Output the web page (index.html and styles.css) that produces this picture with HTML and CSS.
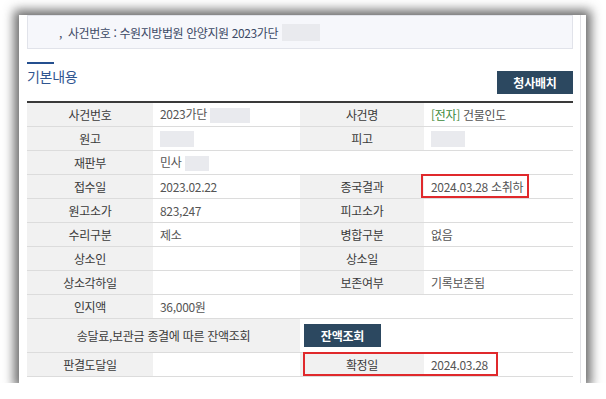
FILE: index.html
```html
<!DOCTYPE html>
<html lang="ko">
<head>
    <meta charset="UTF-8">
    <title>사건 기본내용</title>
    <link rel="stylesheet" href="styles.css">
</head>
<body>
    <div class="frame">
        <div class="inner">
            <div class="case-info">
                <span class="bullet">,</span> 사건번호 : 수원지방법원 안양지원 2023가단 <span class="mask mask-info"></span>
            </div>

            <div class="title-row">
                <h3 class="title">기본내용</h3>
                <button class="btn btn-map">청사배치</button>
            </div>

            <table class="basic">
                <colgroup>
                    <col class="c-label">
                    <col class="c-value">
                    <col class="c-label2">
                    <col class="c-value2">
                </colgroup>
                <tr>
                    <th>사건번호</th>
                    <td>2023가단 <span class="mask mask-no"></span></td>
                    <th>사건명</th>
                    <td><span class="green">[전자]</span> 건물인도</td>
                </tr>
                <tr>
                    <th>원고</th>
                    <td><span class="mask mask-name"></span></td>
                    <th>피고</th>
                    <td><span class="mask mask-name"></span></td>
                </tr>
                <tr>
                    <th>재판부</th>
                    <td colspan="3">민사 <span class="mask mask-div"></span></td>
                </tr>
                <tr>
                    <th>접수일</th>
                    <td>2023.02.22</td>
                    <th>종국결과</th>
                    <td class="mark-cell"><span class="mark mark-result"></span>2024.03.28 소취하</td>
                </tr>
                <tr>
                    <th>원고소가</th>
                    <td>823,247</td>
                    <th>피고소가</th>
                    <td></td>
                </tr>
                <tr>
                    <th>수리구분</th>
                    <td>제소</td>
                    <th>병합구분</th>
                    <td>없음</td>
                </tr>
                <tr>
                    <th>상소인</th>
                    <td></td>
                    <th>상소일</th>
                    <td></td>
                </tr>
                <tr>
                    <th>상소각하일</th>
                    <td></td>
                    <th>보존여부</th>
                    <td>기록보존됨</td>
                </tr>
                <tr>
                    <th>인지액</th>
                    <td colspan="3">36,000원</td>
                </tr>
                <tr class="tall">
                    <th colspan="2">송달료,보관금 종결에 따른 잔액조회</th>
                    <td colspan="2" class="btn-cell"><button class="btn btn-balance">잔액조회</button></td>
                </tr>
                <tr>
                    <th>판결도달일</th>
                    <td></td>
                    <th class="mark-cell"><span class="mark mark-confirm"></span>확정일</th>
                    <td>2024.03.28</td>
                </tr>
            </table>
        </div>
    </div>
</body>
</html>
```

FILE: styles.css
```css
body {
    margin: 0;
    background: #ffffff;
    font-family: "Noto Sans CJK KR", "Noto Sans", sans-serif;
    color: #555;
}
.frame {
    margin: 15px 0 0 19px;
    width: 567px;
    height: 368px;
    background: #fff;
    box-shadow: 0 0 10px 5px rgba(60, 60, 60, 0.75);
}
.inner {
    position: relative;
    padding: 0 13px 0 8px;
    height: 100%;
    box-sizing: border-box;
}
.inner::after {
    content: "";
    position: absolute;
    right: 5px;
    top: 0;
    bottom: 0;
    border-right: 1px solid #e2e2e6;
}
.case-info {
    height: 34px;
    box-sizing: border-box;
    background: #f6f7fb;
    border: 1px solid #e1e3ea;
    padding: 0 0 0 31px;
    display: flex;
    align-items: center;
    font-size: 12px;
    color: #3d4a66;
    letter-spacing: -0.4px;
}
.bullet {
    margin-right: 6px;
}
.mask {
    display: inline-block;
    background: #e9eaee;
    vertical-align: middle;
}
.mask-info {
    width: 38px;
    height: 17px;
    margin-left: 4px;
}
.mask-no {
    width: 40px;
    height: 15px;
}
.mask-name {
    width: 34px;
    height: 16px;
}
.mask-div {
    width: 24px;
    height: 15px;
}
.title-row {
    display: flex;
    justify-content: space-between;
    align-items: flex-end;
    height: 45px;
    margin-bottom: 7px;
}
.title {
    margin: 0 0 10px;
    padding-top: 6px;
    font-size: 14px;
    font-weight: normal;
    color: #2f5590;
    line-height: 16px;
    letter-spacing: -0.3px;
    background: linear-gradient(#244f8f, #244f8f) no-repeat 0 0 / 27px 2px;
}
.btn {
    border: none;
    background: #2c4860;
    color: #fff;
    font-family: inherit;
    font-size: 12px;
    font-weight: bold;
    letter-spacing: -0.2px;
    padding: 0;
    cursor: pointer;
}
.btn-map {
    width: 76px;
    height: 23px;
}
.basic {
    width: 546px;
    border-collapse: collapse;
    border-top: 2px solid #3a3a3a;
    font-size: 12px;
    letter-spacing: -0.3px;
    table-layout: fixed;
}
.c-label { width: 126px; }
.c-value { width: 147px; }
.c-label2 { width: 124px; }
.c-value2 { width: 149px; }
.basic th,
.basic td {
    height: 23px;
    padding: 0;
    border-bottom: 1px solid #dcdcdc;
    line-height: 15px;
    white-space: nowrap;
}
.basic th {
    background: #f1f1f1;
    font-weight: normal;
    color: #3a3a3a;
    text-align: center;
}
.basic td {
    padding-left: 7px;
    color: #555;
}
.basic tr.tall th,
.basic tr.tall td {
    height: 33px;
}
.basic td.btn-cell {
    padding-left: 4px;
}
.btn-balance {
    width: 77px;
    height: 23px;
    vertical-align: middle;
}
.green {
    color: #3c8a3a;
}
.mark-cell {
    position: relative;
}
.mark {
    position: absolute;
    border: 2px solid #e0292c;
    box-sizing: border-box;
    height: 24px;
    top: -1px;
}
.mark-result {
    left: -3px;
    width: 108px;
}
.mark-confirm {
    left: 3px;
    width: 195px;
}
```
